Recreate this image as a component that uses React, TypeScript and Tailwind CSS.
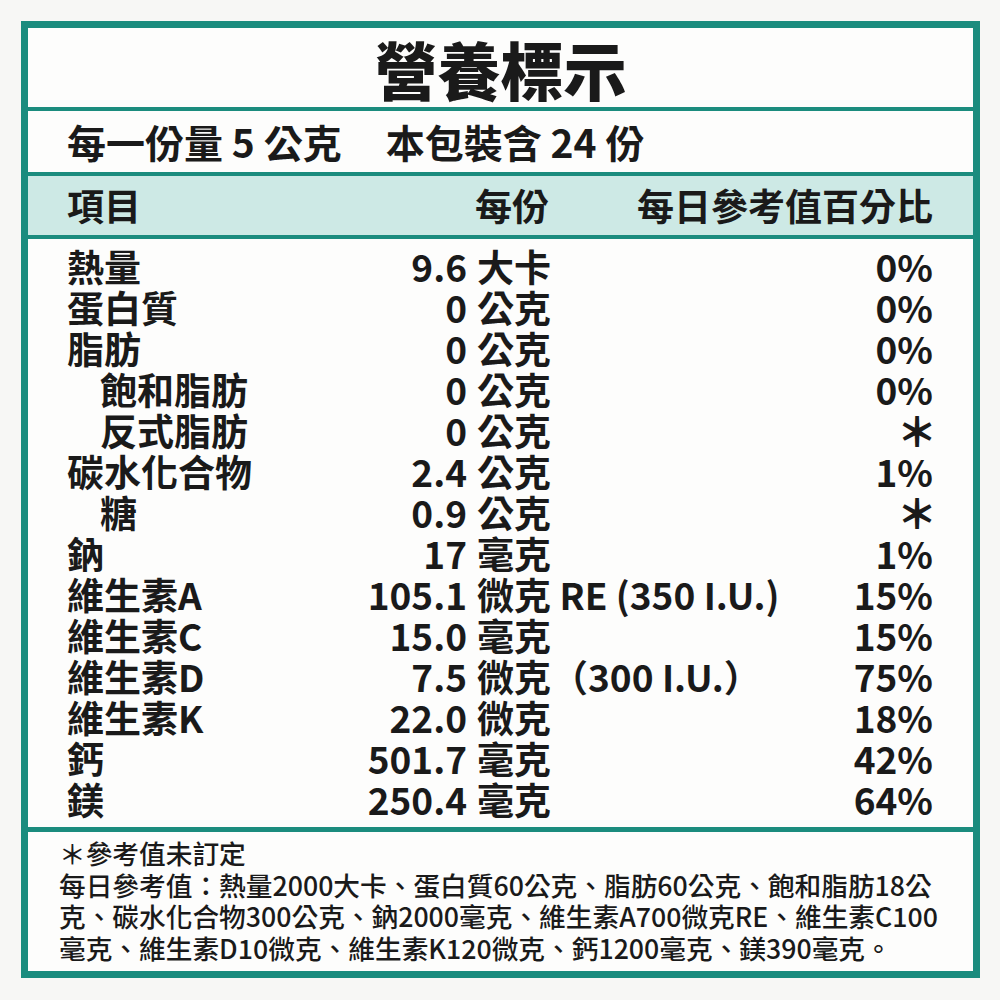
import React from "react";

type Row = { name: string; indent?: boolean; num: string; unit: string; pct: string };

const rows: Row[] = [
  { name: "熱量", num: "9.6", unit: "大卡", pct: "0%" },
  { name: "蛋白質", num: "0", unit: "公克", pct: "0%" },
  { name: "脂肪", num: "0", unit: "公克", pct: "0%" },
  { name: "飽和脂肪", indent: true, num: "0", unit: "公克", pct: "0%" },
  { name: "反式脂肪", indent: true, num: "0", unit: "公克", pct: "＊" },
  { name: "碳水化合物", num: "2.4", unit: "公克", pct: "1%" },
  { name: "糖", indent: true, num: "0.9", unit: "公克", pct: "＊" },
  { name: "鈉", num: "17", unit: "毫克", pct: "1%" },
  { name: "維生素A", num: "105.1", unit: "微克 RE (350 I.U.)", pct: "15%" },
  { name: "維生素C", num: "15.0", unit: "毫克", pct: "15%" },
  { name: "維生素D", num: "7.5", unit: "微克（300 I.U.）", pct: "75%" },
  { name: "維生素K", num: "22.0", unit: "微克", pct: "18%" },
  { name: "鈣", num: "501.7", unit: "毫克", pct: "42%" },
  { name: "鎂", num: "250.4", unit: "毫克", pct: "64%" },
];

export default function App() {
  return (
    <div className="w-[1000px] h-[1000px] bg-[#f7f7f5] pt-[21px] pl-[21px] font-['Noto_Sans_CJK_TC','Noto_Sans',sans-serif] text-[#1a1a1a]">
      <div className="w-[959px] h-[957px] border-[7px] border-[#1b8c7e] bg-[#fdfdfc] flex flex-col">
        <div className="h-[79px] flex items-center justify-center">
          <span className="text-[63px] leading-none font-black">營養標示</span>
        </div>
        <div className="h-[4px] bg-[#1b8c7e]" />
        <div className="h-[61px] flex items-center pl-[39px] text-[39px] font-bold leading-none">
          <span>每一份量 5 公克</span>
          <span className="ml-[44px]">本包裝含 24 份</span>
        </div>
        <div className="h-[4px] bg-[#1b8c7e]" />
        <div className="h-[59px] bg-[#cde9e5] flex items-center pl-[39px] pr-[40px] text-[37px] font-bold leading-none">
          <div className="w-[482px] flex justify-between">
            <span>項目</span>
            <span>每份</span>
          </div>
          <div className="flex-1 text-right">每日參考值百分比</div>
        </div>
        <div className="h-[4px] bg-[#1b8c7e]" />
        <div className="h-[588px] pt-[7px] pl-[39px] pr-[40px] text-[37px] font-bold leading-[41px]">
          {rows.map((r) => (
            <div key={r.name} className="flex h-[41px] items-center">
              <div className={r.indent ? "w-[260px] pl-[33px]" : "w-[260px]"}>{r.name}</div>
              <div className="w-[140px] text-right">{r.num}</div>
              <div className="ml-[10px] whitespace-nowrap">{r.unit}</div>
              <div className="flex-1 text-right">
                {r.pct === "＊" ? (
                  <span className="font-black text-[40px] mr-[-4px]">＊</span>
                ) : (
                  r.pct
                )}
              </div>
            </div>
          ))}
        </div>
        <div className="h-[5px] bg-[#1b8c7e]" />
        <div className="flex-1 pl-[31px] pt-[5px] text-[26.7px] leading-[31.7px] font-medium whitespace-nowrap">
          <div>＊參考值未訂定</div>
          <div>每日參考值：熱量2000大卡、蛋白質60公克、脂肪60公克、飽和脂肪18公</div>
          <div>克、碳水化合物300公克、鈉2000毫克、維生素A700微克RE、維生素C100</div>
          <div>毫克、維生素D10微克、維生素K120微克、鈣1200毫克、鎂390毫克。</div>
        </div>
      </div>
    </div>
  );
}
